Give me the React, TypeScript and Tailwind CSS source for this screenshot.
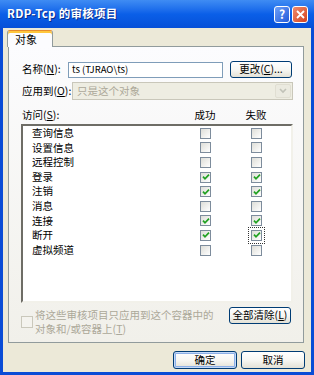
import React from "react";

type BoxProps = { checked?: boolean; focus?: boolean; disabled?: boolean };

function Box({ checked, focus, disabled }: BoxProps) {
  return (
    <span
      className={`flex h-[11px] w-[11px] shrink-0 items-center justify-center border ${
        disabled
          ? "border-[#CAC8BB] bg-[#F4F3EE]"
          : "border-[#7D8C9C] bg-gradient-to-br from-[#DEDED8] to-white"
      } ${focus ? "outline outline-1 outline-dotted outline-[#333] outline-offset-[2px]" : ""}`}
    >
      {checked && (
        <svg width="8" height="8" viewBox="0 0 8 8">
          <path d="M1 3.6 L3 5.8 L7 1.6" stroke="#21A121" strokeWidth="1.7" fill="none" />
        </svg>
      )}
    </span>
  );
}

const rows: { name: string; ok: boolean; fail: boolean; focus?: boolean }[] = [
  { name: "查询信息", ok: false, fail: false },
  { name: "设置信息", ok: false, fail: false },
  { name: "远程控制", ok: false, fail: false },
  { name: "登录", ok: true, fail: true },
  { name: "注销", ok: true, fail: true },
  { name: "消息", ok: false, fail: false },
  { name: "连接", ok: true, fail: true },
  { name: "断开", ok: true, fail: true, focus: true },
  { name: "虚拟频道", ok: false, fail: false },
];

function XpButton({ children, def, className = "" }: { children: React.ReactNode; def?: boolean; className?: string }) {
  return (
    <div
      className={`flex items-center justify-center whitespace-nowrap rounded-[3px] border border-[#003C74] bg-gradient-to-b from-white via-[#F7F7F3] to-[#E3E1D6] text-[10.5px] leading-none text-black ${
        def ? "shadow-[inset_0_0_0_1px_#C4D9F7,inset_0_0_0_2px_#8CB0E8]" : ""
      } ${className}`}
    >
      {children}
    </div>
  );
}

export default function App() {
  return (
    <div className="flex h-[375px] w-[314px] flex-col overflow-hidden bg-[#0A4CD6] font-['Noto_Sans_CJK_SC',sans-serif] text-[10.5px] text-black">
      {/* title bar */}
      <div className="flex h-[28px] shrink-0 items-center bg-gradient-to-b from-[#3F8CF3] via-[#0B5FE8] to-[#0650D8] pl-[7px] pr-[6px]">
        <span className="flex-1 whitespace-nowrap text-[11.5px] font-bold leading-none tracking-[0.3px] text-white [text-shadow:1px_1px_0_#0A2C8A]">
          RDP-Tcp 的审核项目
        </span>
        <div className="flex gap-[2px]">
          <div className="flex h-[17px] w-[16px] items-center justify-center rounded-[3px] border border-white bg-gradient-to-br from-[#6FA0F8] to-[#2259D8] text-[12px] font-bold leading-none text-white">
            ?
          </div>
          <div className="flex h-[17px] w-[16px] items-center justify-center rounded-[3px] border border-white bg-gradient-to-br from-[#F08A6A] to-[#D2401C]">
            <svg width="9" height="9" viewBox="0 0 9 9">
              <path d="M1 1 L8 8 M8 1 L1 8" stroke="white" strokeWidth="1.8" />
            </svg>
          </div>
        </div>
      </div>

      {/* body */}
      <div className="mx-[3px] mb-[3px] flex flex-1 flex-col bg-[#ECE9D8]">
        {/* tab */}
        <div className="relative z-10 ml-[4px] mt-[2px] flex h-[17px] w-[46px] items-center rounded-t-[3px] border border-b-0 border-[#919B9C] border-t-[#E68B2C] bg-[#FCFCFE] pl-[7px] text-[11px] leading-none shadow-[inset_0_2px_0_#FFC73C]">
          对象
        </div>
        {/* panel */}
        <div className="-mt-px ml-[5px] flex h-[297px] w-[296px] flex-col border border-[#919B9C] bg-gradient-to-b from-[#FCFCFE] to-[#F1F0EA] pl-[13px] pt-[14px]">
          <div className="flex h-[17px] items-center">
            <span className="w-[46px] whitespace-nowrap leading-none">
              名称(<span className="underline">N</span>):
            </span>
            <div className="flex h-[16px] w-[155px] items-center whitespace-nowrap border border-[#7F9DB9] bg-white pl-[3px] text-[9.5px] leading-none">
              {"ts (TJRAO\\ts)"}
            </div>
            <XpButton className="ml-[7px] h-[17px] w-[62px]">
              更改(<span className="underline">C</span>)...
            </XpButton>
          </div>
          <div className="mt-[4px] flex h-[18px] items-center">
            <span className="w-[50px] whitespace-nowrap leading-none">
              应用到(<span className="underline">O</span>):
            </span>
            <div className="flex h-[18px] w-[221px] items-center border border-[#C9C7BA] bg-[#EEEDE2] pl-[4px] leading-none text-[#ACA899]">
              <span className="flex-1">只是这个对象</span>
              <div className="mr-px flex h-[14px] w-[16px] items-center justify-center rounded-[2px] border border-[#E0DED2] bg-[#EBEAE0]">
                <svg width="8" height="6" viewBox="0 0 8 6">
                  <path d="M1 1 L4 4 L7 1" stroke="#C1C2B8" strokeWidth="1.6" fill="none" />
                </svg>
              </div>
            </div>
          </div>
          <div className="flex h-[24px] items-end whitespace-nowrap pb-[2px] leading-[14px]">
            <span className="w-[168px]">
              访问(<span className="underline">S</span>):
            </span>
            <span className="w-[30px] text-center">成功</span>
            <span className="ml-[21px] w-[30px] text-center">失败</span>
          </div>
          <div className="-ml-px h-[179px] w-[272px] border-2 border-b-[#F2F1EA] border-l-[#6E6D66] border-r-[#F2F1EA] border-t-[#6E6D66] bg-white pl-[9px]">
            {rows.map((r) => (
              <div key={r.name} className="flex h-[14.6px] items-center leading-none">
                <span className="w-[168px]">{r.name}</span>
                <Box checked={r.ok} />
                <span className="ml-[40px]">
                  <Box checked={r.fail} focus={r.focus} />
                </span>
              </div>
            ))}
          </div>
          <div className="mt-[4px] flex">
            <div className="-ml-px mt-[1px] flex w-[208px] items-center">
              <span className="flex h-[12px] w-[12px] shrink-0 border border-[#CAC8BB] bg-[#F4F3EE]" />
              <span className="ml-[2px] whitespace-nowrap text-[10.5px] leading-[13.5px] text-[#ACA899]">
                将这些审核项目只应用到这个容器中的
                <br />
                对象和/或容器上(<span className="underline">T</span>)
              </span>
            </div>
            <XpButton className="h-[17px] w-[62px]">
              全部清除(<span className="underline">L</span>)
            </XpButton>
          </div>
        </div>
        {/* bottom buttons */}
        <div className="mt-[8px] flex justify-end gap-[4px] pr-[6px]">
          <XpButton def className="h-[18px] w-[64px]">
            确定
          </XpButton>
          <XpButton className="h-[18px] w-[64px]">取消</XpButton>
        </div>
      </div>
    </div>
  );
}
